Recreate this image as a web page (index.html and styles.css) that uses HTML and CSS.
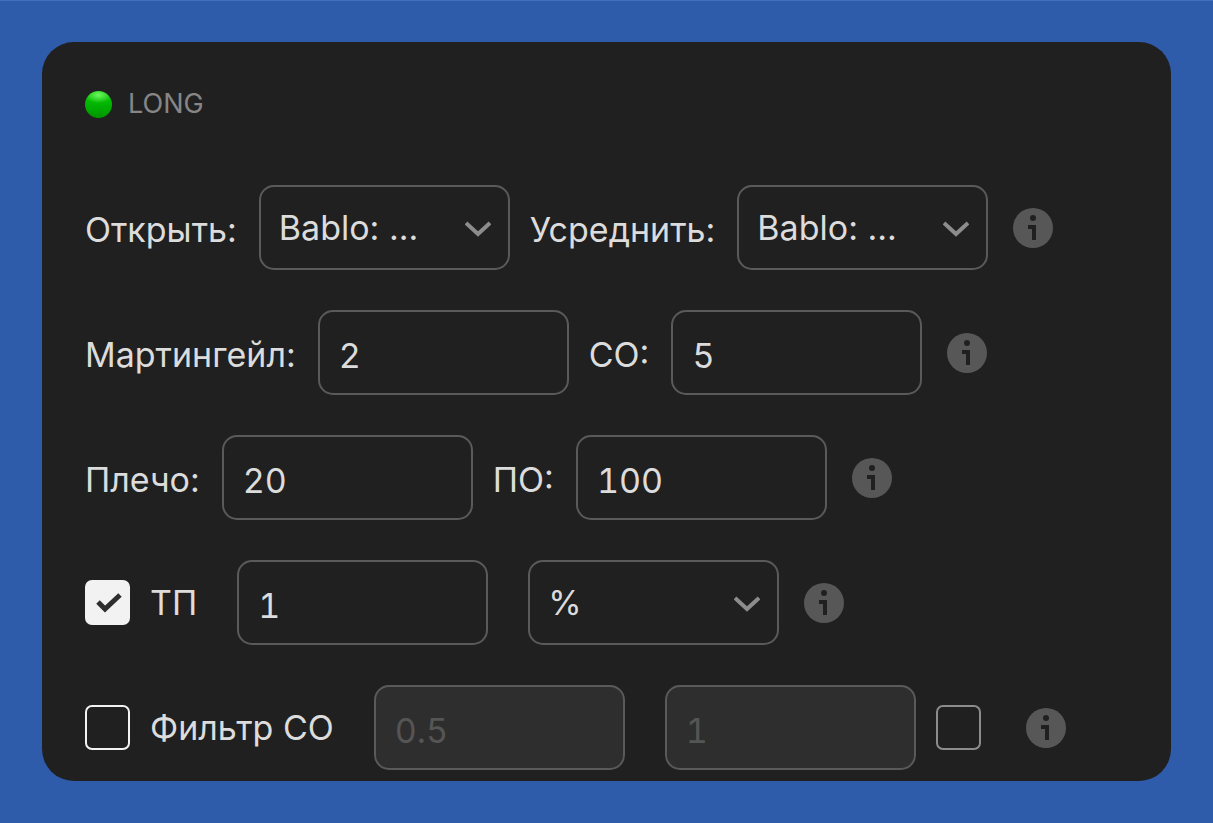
FILE: index.html
```
<!DOCTYPE html>
<html lang="ru">
  <head>
    <meta charset="utf-8">
    <title>Long</title>
    <link rel="stylesheet" href="styles.css">
  </head>
  <body>
    <svg class="sprite" aria-hidden="true">
      <symbol id="info" viewBox="0 0 40 40">
        <circle class="disc" cx="20" cy="20" r="20" />
        <circle class="mark" cx="20" cy="10" r="3" />
        <path class="mark" d="M15 17h8v15h-4v-11h-4z" />
      </symbol>
      <symbol id="chevron" viewBox="0 0 26 16">
        <path d="M1 2l12 11L25 2" />
      </symbol>
    </svg>

    <main class="card">
      <h1 class="title"><span class="dot"></span>LONG</h1>

      <form class="rows">
        <div class="row">
          <label class="caption" for="open">Открыть:</label>
          <div class="select">
            <select id="open"><option>Bablo: ...</option></select>
            <svg class="chevron"><use href="#chevron" /></svg>
          </div>
          <label class="caption" for="average">Усреднить:</label>
          <div class="select">
            <select id="average"><option>Bablo: ...</option></select>
            <svg class="chevron"><use href="#chevron" /></svg>
          </div>
          <button class="info" type="button" aria-label="Информация"><svg><use href="#info" /></svg></button>
        </div>

        <div class="row">
          <label class="caption" for="martingale">Мартингейл:</label>
          <input class="field" id="martingale" type="text" value="2">
          <label class="caption" for="so">СО:</label>
          <input class="field" id="so" type="text" value="5">
          <button class="info" type="button" aria-label="Информация"><svg><use href="#info" /></svg></button>
        </div>

        <div class="row">
          <label class="caption" for="leverage">Плечо:</label>
          <input class="field" id="leverage" type="text" value="20">
          <label class="caption" for="po">ПО:</label>
          <input class="field" id="po" type="text" value="100">
          <button class="info" type="button" aria-label="Информация"><svg><use href="#info" /></svg></button>
        </div>

        <div class="row">
          <label class="check">
            <span class="box">
              <input type="checkbox" checked>
              <svg class="tick" viewBox="0 0 26 20"><path d="M2 9l7 7L24 2" /></svg>
            </span>
            ТП
          </label>
          <div class="pair">
            <input class="field" type="text" value="1" aria-label="ТП">
            <div class="select">
              <select aria-label="%"><option>%</option></select>
              <svg class="chevron"><use href="#chevron" /></svg>
            </div>
          </div>
          <button class="info" type="button" aria-label="Информация"><svg><use href="#info" /></svg></button>
        </div>

        <div class="row">
          <label class="check">
            <span class="box"><input type="checkbox"></span>
            Фильтр СО
          </label>
          <div class="pair">
            <input class="field" type="text" value="0.5" aria-label="Фильтр СО" disabled>
            <input class="field" type="text" value="1" aria-label="Фильтр СО" disabled>
          </div>
          <label class="check">
            <span class="box"><input type="checkbox" aria-label="Фильтр СО" disabled></span>
          </label>
          <button class="info" type="button" aria-label="Информация"><svg><use href="#info" /></svg></button>
        </div>
      </form>
    </main>
  </body>
</html>
```

FILE: styles.css
```
*,
*:after,
*:before {
  box-sizing: border-box;
}

html {
  background: #2f5bab;
}

body {
  margin: 0;
  padding: 41px 42px 42px;
  border-top: 1px solid #4270bd;
  color: #dcdcdc;
  font-family: Inter, "Liberation Sans", sans-serif;
  font-size: 34px;
  line-height: 40px;
}

input,
select,
button {
  margin: 0;
  font: inherit;
  color: inherit;
}

.sprite {
  position: absolute;
  width: 0;
  height: 0;
}

.card {
  padding: 42px 43px 11px;
  border-radius: 32px;
  background: #202020;
}

.title {
  display: flex;
  align-items: center;
  gap: 16px;
  margin: 0 0 61px;
  color: #868686;
  font-size: 27px;
  font-weight: 400;
}

.dot {
  width: 27px;
  height: 27px;
  border-radius: 50%;
  background:
    radial-gradient(ellipse 14px 8px at 50% 15%, #6cf85e, transparent),
    linear-gradient(#12c80c, #00b400 50%, #009400);
}

.rows {
  display: grid;
  gap: 40px;
}

.row {
  display: flex;
  align-items: center;
  gap: 20px;
}

.caption {
  padding: 5px 2px 0 0;
  white-space: nowrap;
}

.field,
.select select {
  display: block;
  width: 251px;
  height: 85px;
  border: 2px solid #5a5a5a;
  border-radius: 15px;
  background: none;
}

.field {
  padding: 5px 19px 0;
  font-variant-numeric: tabular-nums;
}

.field:disabled {
  background: #2e2e2e;
  color: #555;
}

.select {
  position: relative;
}

.select select {
  padding: 0 60px 0 18px;
  appearance: none;
}

.chevron {
  position: absolute;
  top: 36px;
  right: 19px;
  width: 26px;
  height: 16px;
  fill: none;
  stroke: #8c8c8c;
  stroke-width: 4;
  pointer-events: none;
}

.pair {
  display: flex;
  gap: 40px;
}

.check {
  display: flex;
  align-items: center;
  gap: 20px;
  white-space: nowrap;
}

.check + .pair {
  margin-left: 20px;
}

.box {
  position: relative;
  display: flex;
}

.box input {
  width: 45px;
  height: 45px;
  border: 2px solid #f2f2f2;
  border-radius: 7px;
  appearance: none;
}

.box input:checked {
  background: #f2f2f2;
}

.box input:disabled {
  border-color: #8c8c8c;
}

.tick {
  position: absolute;
  top: 13px;
  left: 11px;
  width: 26px;
  height: 20px;
  fill: none;
  stroke: #2e2e2e;
  stroke-width: 5;
  pointer-events: none;
}

.info {
  display: flex;
  margin-left: 5px;
  padding: 0;
  border: 0;
  background: none;
}

.check + .info {
  margin-left: 25px;
}

.info svg {
  width: 40px;
  height: 40px;
}

.disc {
  fill: #575757;
}

.mark {
  fill: #202020;
}
```
